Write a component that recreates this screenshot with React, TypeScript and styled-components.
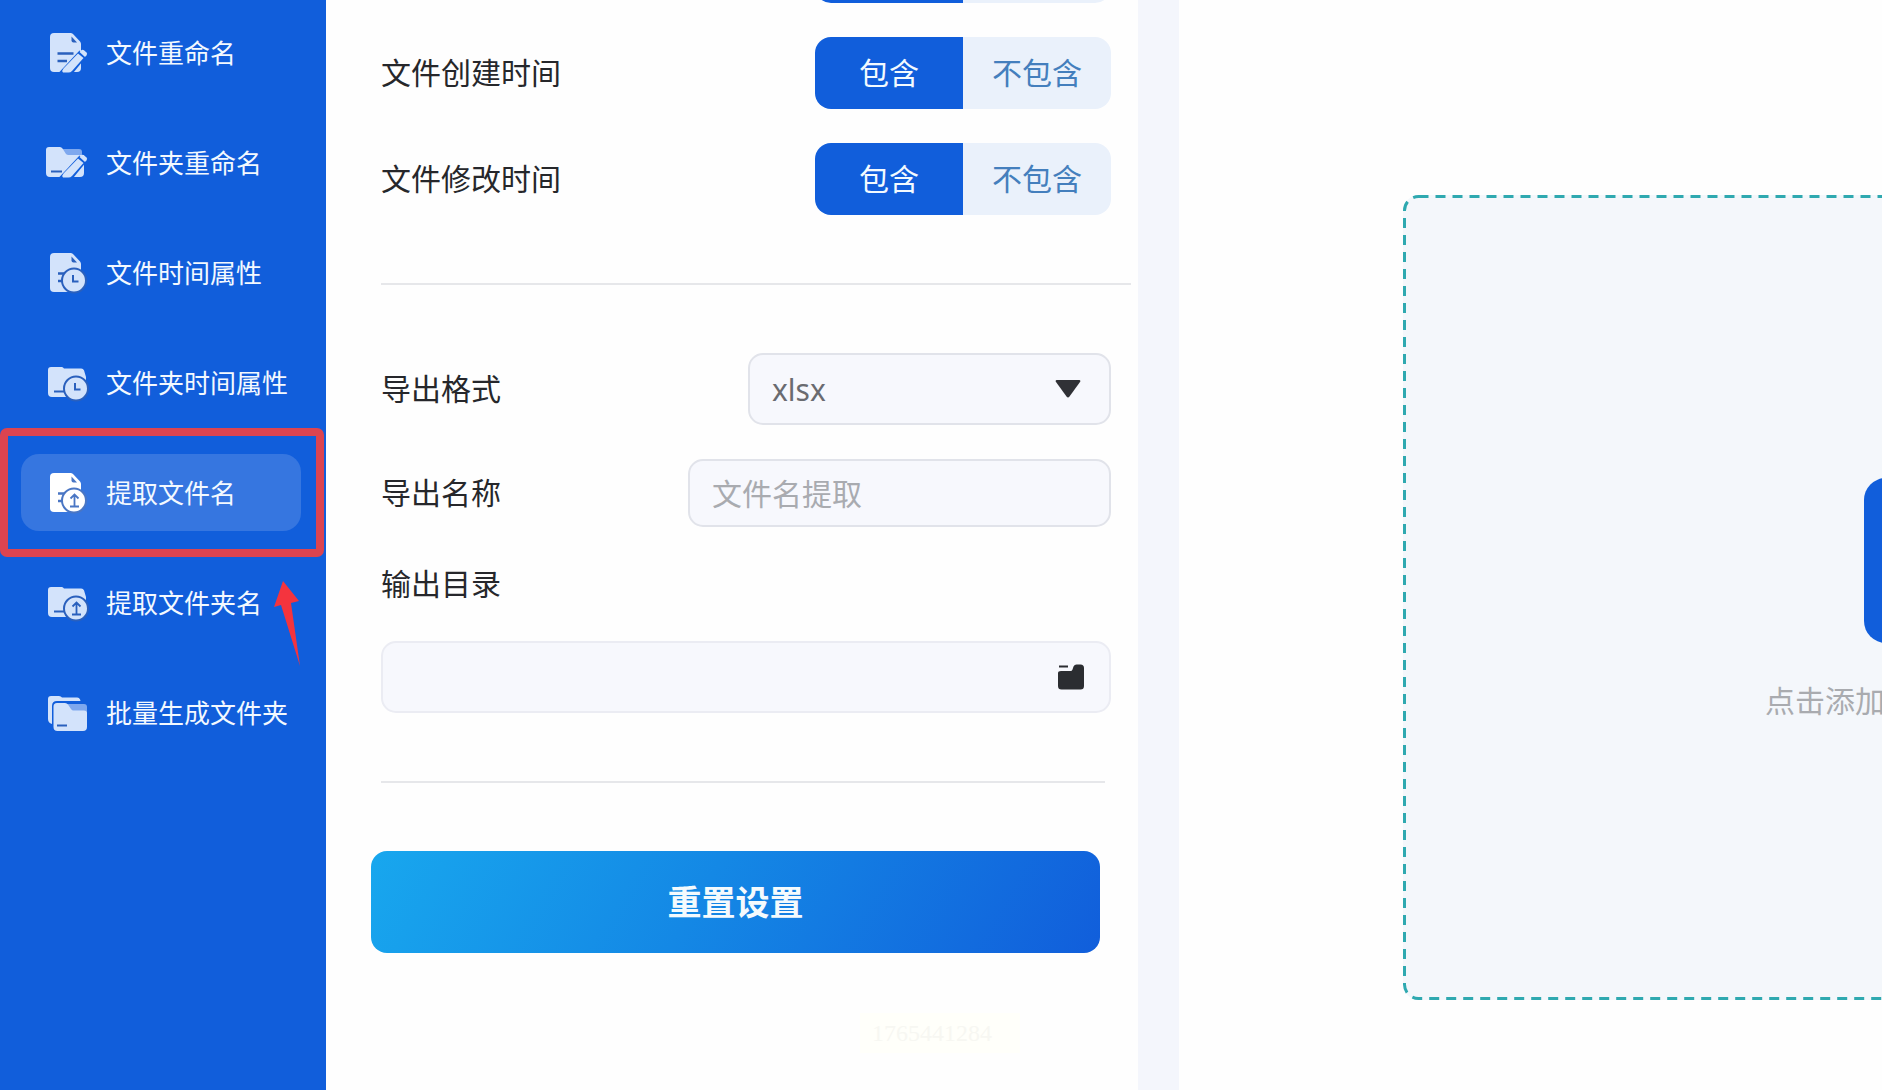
import React, { useState } from "react";
import styled, { createGlobalStyle, css } from "styled-components";

const BLUE = "#115edb";

const GlobalStyle = createGlobalStyle`
  *, *::before, *::after { box-sizing: border-box; }
  body {
    margin: 0;
    background: #fefefe;
    color: #26272b;
    font-family: "Noto Sans", "Noto Sans CJK SC", sans-serif;
    overflow: hidden;
  }
  button, input, select { font: inherit; color: inherit; }
`;

const Page = styled.div`
  display: flex;
  min-height: 100vh;
  overflow: hidden;
`;

/* ---------- sidebar ---------- */

const Sidebar = styled.nav`
  flex: none;
  width: 326px;
  padding: 14px 25px 14px 21px;
  background: ${BLUE};
`;

const MenuList = styled.ul`
  display: flex;
  flex-direction: column;
  gap: 33px;
  margin: 0;
  padding: 0;
  list-style: none;
`;

const MenuItem = styled.li`
  position: relative;
`;

const MenuLink = styled.a<{ $active?: boolean }>`
  display: flex;
  align-items: center;
  gap: 17px;
  height: 77px;
  padding-left: 24px;
  border-radius: 18px;
  font-size: 26px;
  line-height: 32px;
  white-space: nowrap;
  text-decoration: none;
  color: #f3f9ff;
  background: ${(p) => (p.$active ? "#3676e0" : "transparent")};
`;

const MenuIcon = styled.svg<{ $active?: boolean }>`
  --ink: ${(p) => (p.$active ? "#ffffff" : "#d3e3fb")};
  --cut: ${(p) => (p.$active ? "#4a76c4" : "#2a60bd")};
  --back: #7ea8ee;
  flex: none;
  width: 44px;
  height: 40px;
  overflow: visible;
`;

const MarkFrame = styled.div`
  position: absolute;
  inset: -26px -23px -26px -21px;
  border: 8px solid #dc4450;
  border-radius: 7px;
  pointer-events: none;
`;

const MarkArrow = styled.svg`
  position: absolute;
  left: 252px;
  top: 126px;
  width: 30px;
  height: 88px;
  pointer-events: none;
`;

/* ---------- settings panel ---------- */

const Settings = styled.form`
  flex: none;
  display: flex;
  flex-direction: column;
  gap: 34px;
  width: 812px;
  margin-top: -69px;
  padding: 0 27px 0 55px;
`;

const Row = styled.div`
  display: flex;
  align-items: center;
  justify-content: space-between;
`;

const labelText = css`
  font-size: 30px;
  line-height: 46px;
`;

const RowLabel = styled.label`
  ${labelText}
`;

const RowTitle = styled.span`
  ${labelText}
`;

const Switch = styled.div`
  display: grid;
  grid-template-columns: 1fr 1fr;
  width: 296px;
  height: 72px;
  margin-left: auto;
  border-radius: 16px;
  overflow: hidden;
`;

const SwitchOption = styled.label<{ $on: boolean }>`
  position: relative;
  display: flex;
  align-items: center;
  justify-content: center;
  font-size: 30px;
  line-height: 46px;
  cursor: pointer;
  color: ${(p) => (p.$on ? "#f3faff" : "#447fbd")};
  background: ${(p) => (p.$on ? BLUE : "#eaf1fb")};
`;

const HiddenRadio = styled.input`
  position: absolute;
  inset: 0;
  margin: 0;
  opacity: 0;
`;

const Divider = styled.hr<{ $wide?: boolean }>`
  align-self: stretch;
  height: 2px;
  margin: 34px ${(p) => (p.$wide ? "-20px" : "6px")} 34px 0;
  border: 0;
  background: #e6e7ea;
`;

const field = css`
  width: 100%;
  padding: 0 22px;
  border: 2px solid #e1e3ea;
  border-radius: 15px;
  background: #f7f8fd;
  font-size: 30px;
  outline: none;
`;

const SelectBox = styled.div`
  position: relative;
  width: 363px;
`;

const Select = styled.select`
  ${field}
  appearance: none;
  display: block;
  height: 72px;
  color: #6a6b70;
`;

const SelectArrow = styled.svg`
  position: absolute;
  right: 30px;
  top: 27px;
  width: 26px;
  height: 18px;
  pointer-events: none;
`;

const NameInput = styled.input`
  ${field}
  width: 423px;
  height: 68px;
  &::placeholder { color: #a9abb0; opacity: 1; }
`;

const PathBox = styled.div`
  position: relative;
`;

const PathInput = styled.input`
  ${field}
  display: block;
  height: 72px;
  padding-right: 70px;
  border-color: #ebecf3;
`;

const BrowseButton = styled.button`
  position: absolute;
  right: 27px;
  top: 23px;
  display: flex;
  padding: 0;
  border: 0;
  background: none;
  cursor: pointer;
`;

const ResetButton = styled.button`
  height: 102px;
  margin: 0 11px 0 -10px;
  border: 0;
  border-radius: 16px;
  background: linear-gradient(120deg, #18a7ee 0%, #1488e5 45%, ${BLUE} 100%);
  color: #f4fafd;
  font-size: 34px;
  font-weight: 700;
  line-height: 46px;
  cursor: pointer;
`;

const StampRow = styled.div`
  display: flex;
  justify-content: flex-end;
  padding: 26px 91px 0 0;
`;

const Stamp = styled.small`
  padding: 4px 28px 4px 12px;
  background: #fffffa;
  color: #f7f7f2;
  font-family: "Liberation Serif", serif;
  font-size: 24px;
  line-height: 32px;
`;

/* ---------- file area ---------- */

const Gutter = styled.div`
  flex: none;
  width: 41px;
  background: #f4f6fc;
`;

const Workspace = styled.main`
  flex: 1;
  display: flex;
  min-width: 0;
  padding: 195px 0 90px 224px;
  overflow: hidden;
`;

const DropZone = styled.section`
  position: relative;
  flex: none;
  display: flex;
  flex-direction: column;
  align-items: center;
  justify-content: center;
  gap: 42px;
  width: 1086px;
  border-radius: 16px;
  background: #f4f7fb;
`;

const DashedOutline = styled.svg`
  position: absolute;
  inset: 0;
  width: 100%;
  height: 100%;
  pointer-events: none;
  rect {
    width: calc(100% - 3px);
    height: calc(100% - 3px);
  }
`;

const AddButton = styled.button`
  width: 165px;
  height: 165px;
  border: 0;
  border-radius: 22px;
  background: ${BLUE};
  cursor: pointer;
`;

const DropHint = styled.p`
  width: 362px;
  margin: 0;
  color: #a9abaf;
  font-size: 30px;
  line-height: 32px;
  white-space: nowrap;
`;

/* ---------- icons ---------- */

const FileShape = () => (
  <>
    <path
      d="M9 0H25.5Q27 0 28 1L35 8.5Q36 9.600 36 11V35Q36 39 32 39H9Q5 39 5 35V4Q5 0 9 0Z"
      fill="var(--ink)"
    />
    <path d="M26.500 3.500V7.500Q26.500 9.500 28.500 9.500H32Z" fill="var(--cut)" />
  </>
);

const FolderShape = () => (
  <>
    <path
      d="M6 4H17Q18 4 19 5.500H36Q39 5.500 39.500 9L41 14V30Q41 34 37 34H7Q3 34 3 30V7Q3 4 6 4Z"
      fill="var(--ink)"
    />
    <path d="M9 28.500H20" stroke="var(--cut)" strokeWidth="2" />
  </>
);

const Pencil = ({ y = 0 }: { y?: number }) => (
  <g transform={`translate(0 ${y})`}>
    <path d="M14 39.500L34.500 17.500L42 23L28.500 39.500Z" fill={BLUE} />
    <path d="M18 39.500Q16.500 37.500 18.500 35.500L33 20.500L38.500 25L27 38Q25.500 39.500 23.500 39.500Z" fill="var(--ink)" />
    <path d="M34.500 19L36 17.500Q37.500 16 39 17.300L41.500 19.500Q42.800 20.800 41.500 22.300L40 24Z" fill="var(--ink)" />
  </g>
);

const Badge = ({ cx, cy, kind }: { cx: number; cy: number; kind: "clock" | "up" }) => (
  <g transform={`translate(${cx} ${cy})`}>
    <circle r="12" fill="var(--ink)" stroke="var(--cut)" strokeWidth="2" />
    {kind === "clock" ? (
      <path d="M-1 -5.500V1H4.500" fill="none" stroke="var(--cut)" strokeWidth="2" />
    ) : (
      <path
        d="M0.500 5V-5M-3.500 -2L0.500 -6L4.500 -2M-4 6H5"
        fill="none"
        stroke="var(--cut)"
        strokeWidth="1.800"
      />
    )}
  </g>
);

type IconName =
  | "file-edit" | "folder-edit" | "file-clock" | "folder-clock"
  | "file-up" | "folder-up" | "folders";

const drawings: Record<IconName, React.ReactNode> = {
  "file-edit": (
    <>
      <FileShape />
      <path d="M12.500 20.500H28.500M12.500 28H22" stroke="var(--cut)" strokeWidth="2.500" />
      <Pencil />
    </>
  ),
  "folder-edit": (
    <>
      <path d="M17 6H34Q37 6 37 9V14H20Z" fill="var(--back)" />
      <path
        d="M4 4H15Q16.500 4 17.500 5.500L21 11Q22 12 23.500 12H39V30Q39 34 35 34H5Q1 34 1 30V7Q1 4 4 4Z"
        fill="var(--ink)"
      />
      <path d="M6 28.500H17" stroke="var(--cut)" strokeWidth="2" />
      <Pencil y={-5} />
    </>
  ),
  "file-clock": (
    <>
      <FileShape />
      <path d="M13 20.500H19M13 28H18" stroke="var(--cut)" strokeWidth="2.500" />
      <Badge cx={29} cy={27.5} kind="clock" />
    </>
  ),
  "folder-clock": (
    <>
      <FolderShape />
      <Badge cx={31} cy={25.5} kind="clock" />
    </>
  ),
  "file-up": (
    <>
      <FileShape />
      <path d="M13 20.500H19M13 28H18" stroke="var(--cut)" strokeWidth="2.500" />
      <Badge cx={29} cy={27.5} kind="up" />
    </>
  ),
  "folder-up": (
    <>
      <FolderShape />
      <Badge cx={31} cy={25.5} kind="up" />
    </>
  ),
  folders: (
    <>
      <path
        d="M6 3H14Q16 3 17 4.500H32Q35 4.500 35.500 8H12Q7 8 7 13V31Q3 30 3 26V6Q3 3 6 3Z"
        fill="var(--ink)"
      />
      <path d="M22 11H39Q42 11 42 14V20H25Z" fill="var(--back)" />
      <path
        d="M12 10H20Q22 10 23 11.500L26 16Q27 17.500 28.500 17.500H39Q42 17.500 42 20V34Q42 38 38 38H12.500Q8.500 38 8.500 34V13.500Q8.500 10 12 10Z"
        fill="var(--ink)"
      />
      <path d="M12 32.500H22" stroke="var(--cut)" strokeWidth="2" />
    </>
  ),
};

const menu: { icon: IconName; text: string; active?: boolean }[] = [
  { icon: "file-edit", text: "文件重命名" },
  { icon: "folder-edit", text: "文件夹重命名" },
  { icon: "file-clock", text: "文件时间属性" },
  { icon: "folder-clock", text: "文件夹时间属性" },
  { icon: "file-up", text: "提取文件名", active: true },
  { icon: "folder-up", text: "提取文件夹名" },
  { icon: "folders", text: "批量生成文件夹" },
];

function IncludeSwitch({ name, label }: { name: string; label?: string }) {
  const [included, setIncluded] = useState(true);
  return (
    <Row role="radiogroup" aria-label={label ?? name}>
      {label && <RowTitle>{label}</RowTitle>}
      <Switch>
        <SwitchOption $on={included}>
          <HiddenRadio type="radio" name={name} checked={included} onChange={() => setIncluded(true)} />
          包含
        </SwitchOption>
        <SwitchOption $on={!included}>
          <HiddenRadio type="radio" name={name} checked={!included} onChange={() => setIncluded(false)} />
          不包含
        </SwitchOption>
      </Switch>
    </Row>
  );
}

export default function App() {
  return (
    <Page>
      <GlobalStyle />
      <Sidebar>
        <MenuList>
          {menu.map((m) => (
            <MenuItem key={m.text}>
              <MenuLink href="#" $active={m.active} aria-current={m.active ? "page" : undefined}>
                <MenuIcon viewBox="0 0 44 40" $active={m.active} aria-hidden="true">
                  {drawings[m.icon]}
                </MenuIcon>
                {m.text}
              </MenuLink>
              {m.active && (
                <>
                  <MarkFrame />
                  <MarkArrow viewBox="0 0 30 88" aria-hidden="true">
                    <path d="M10 1L26 21L18 23L27 86L8 25L1 27Z" fill="#f4343e" />
                  </MarkArrow>
                </>
              )}
            </MenuItem>
          ))}
        </MenuList>
      </Sidebar>

      <Settings onSubmit={(e) => e.preventDefault()}>
        <IncludeSwitch name="size" />
        <IncludeSwitch name="created" label="文件创建时间" />
        <IncludeSwitch name="modified" label="文件修改时间" />
        <Divider $wide />
        <Row>
          <RowLabel htmlFor="format">导出格式</RowLabel>
          <SelectBox>
            <Select id="format" defaultValue="xlsx">
              <option value="xlsx">xlsx</option>
            </Select>
            <SelectArrow viewBox="0 0 26 18" aria-hidden="true">
              <path d="M1.500 0H24.500Q26 0.500 25 2L14.500 16.500Q13 18.500 11.500 16.500L1 2Q0 0.500 1.500 0Z" fill="#303136" />
            </SelectArrow>
          </SelectBox>
        </Row>
        <Row>
          <RowLabel htmlFor="name">导出名称</RowLabel>
          <NameInput id="name" placeholder="文件名提取" />
        </Row>
        <RowLabel htmlFor="path">输出目录</RowLabel>
        <PathBox>
          <PathInput id="path" />
          <BrowseButton type="button" aria-label="浏览">
            <svg width="26" height="26" viewBox="0 0 26 26" aria-hidden="true">
              <path d="M1 2.500H10" stroke="#2b2d31" strokeWidth="2" />
              <path
                d="M3 7H12.500Q14 7 14.500 5.500L15.500 2.500Q16.500 0.500 18.500 0.500H22.500Q26 0.500 26 4V22Q26 25.500 22.500 25.500H3.500Q0 25.500 0 22V9Q0 7 3 7Z"
                fill="#2b2d31"
              />
            </svg>
          </BrowseButton>
        </PathBox>
        <Divider />
        <ResetButton type="reset">重置设置</ResetButton>
        <StampRow>
          <Stamp>1765441284</Stamp>
        </StampRow>
      </Settings>

      <Gutter />

      <Workspace>
        <DropZone>
          <DashedOutline aria-hidden="true">
            <rect x="1.500" y="1.500" rx="14" fill="none" stroke="#2fa9b0" strokeWidth="3" strokeDasharray="10 7" />
          </DashedOutline>
          <AddButton type="button" aria-label="点击添加" />
          <DropHint>点击添加</DropHint>
        </DropZone>
      </Workspace>
    </Page>
  );
}
